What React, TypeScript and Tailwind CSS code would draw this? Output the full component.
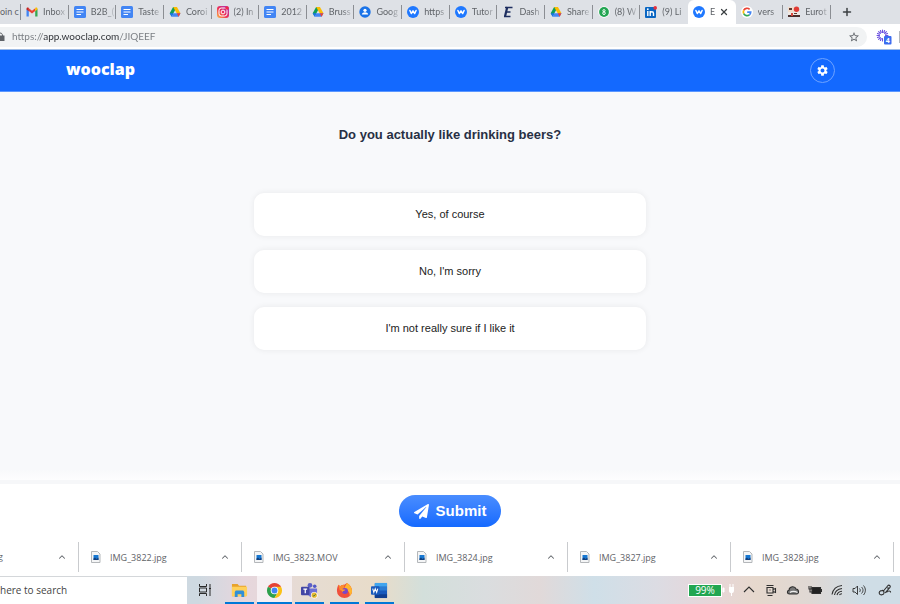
import type { ReactNode } from "react";
import { FaPaperPlane } from "react-icons/fa";
import { MdSettings, MdStarBorder } from "react-icons/md";
import { ChevronUp, Plus, X } from "lucide-react";

type Tab = { title: string; icon: ReactNode; active?: boolean; divider?: boolean };

const GmailIcon = () => (
  <svg viewBox="0 0 12 12" className="size-3">
    <path d="M.5 10.5V3l2.3 1.8v5.7z" fill="#4285f4" />
    <path d="M9.2 10.5V4.8L11.5 3v7.5z" fill="#34a853" />
    <path d="M2.8 5V2.2L6 4.8l3.2-2.6V5L6 7.6z" fill="#ea4335" />
    <path d="M.5 3.6V2.7C.5 1.5 1.9 1.2 2.8 2v3.3z" fill="#c5221f" />
    <path d="M11.5 3.6V2.7c0-1.2-1.4-1.5-2.3-.7v3.3z" fill="#fbbc04" />
  </svg>
);

const DocsIcon = () => (
  <svg viewBox="0 0 12 12" className="size-3">
    <rect width="12" height="12" rx="1.5" fill="#4285f4" />
    <path d="M2.5 3.5h7M2.5 6h7M2.5 8.5h4.5" stroke="#fff" strokeWidth="1.2" />
  </svg>
);

const DriveIcon = () => (
  <svg viewBox="0 0 12 12" className="size-3">
    <path d="M4.1 1h3.8L6 4.3 2.6 10.5.7 7.3z" fill="#0f9d58" />
    <path d="M4.1 1h3.8l3.6 6.3H7.7z" fill="#fbbc04" />
    <path d="M2.6 10.8l1.9-3.5h7l-1.9 3.5z" fill="#4285f4" />
    <path d="M7.7 7.3h3.8l-1.9 3.5z" fill="#ea4335" />
    <path d="M.7 7.3h3.8l-1.9 3.5z" fill="#1a73e8" />
  </svg>
);

const InstagramIcon = () => (
  <svg viewBox="0 0 12 12" className="size-3" fill="none">
    <defs>
      <linearGradient id="insta" x1="0" y1="1" x2="1" y2="0">
        <stop offset="0" stopColor="#fdc04a" />
        <stop offset=".45" stopColor="#ee2f55" />
        <stop offset="1" stopColor="#a033c8" />
      </linearGradient>
    </defs>
    <rect width="12" height="12" rx="3" fill="url(#insta)" />
    <rect x="2" y="2" width="8" height="8" rx="2.3" stroke="#fff" />
    <circle cx="6" cy="6" r="1.9" stroke="#fff" />
    <circle cx="10" cy="2" r="1.8" fill="#f02849" />
  </svg>
);

const ContactsIcon = () => (
  <svg viewBox="0 0 12 12" className="size-3">
    <circle cx="6" cy="6" r="5.7" fill="#1a73e8" />
    <circle cx="6" cy="4.3" r="1.6" fill="#fff" />
    <path d="M2.8 8.6c.4-3 6-3 6.400 0z" fill="#fff" />
  </svg>
);

const WooclapIcon = () => (
  <svg viewBox="0 0 12 12" className="size-3">
    <circle cx="6" cy="6" r="6" fill="#1f78ff" />
    <path
      d="M2.9 4.5l1.4 3L6 4.8l1.7 2.7 1.4-3"
      fill="none"
      stroke="#fff"
      strokeWidth="1.5"
      strokeLinecap="round"
      strokeLinejoin="round"
    />
  </svg>
);

const DashIcon = () => (
  <svg viewBox="0 0 12 12" className="size-3" fill="none" stroke="#1d2d5f">
    <path d="M5.300 1L3 10.500" strokeWidth="2.200" />
    <path d="M3 1.500h7.500M4 6h4.500M2 10.500h6.500" strokeWidth="1.500" />
  </svg>
);

const WhatsappIcon = () => (
  <svg viewBox="0 0 12 12" className="size-3">
    <circle cx="6" cy="6" r="5.8" fill="#fff" />
    <circle cx="6" cy="6" r="4.9" fill="#23a552" />
    <g fill="none" stroke="#fff">
      <circle cx="6" cy="4.7" r="1.1" />
      <circle cx="6" cy="7.2" r="1.3" />
    </g>
  </svg>
);

const LinkedinIcon = () => (
  <svg viewBox="0 0 12 12" className="size-3">
    <rect y="1" width="11" height="11" rx="1" fill="#0a66c2" />
    <path d="M2.8 5v5M5.2 10V5M5.2 7.5c0-2.3 3.3-2.3 3.3 0V10" fill="none" stroke="#fff" strokeWidth="1.4" />
    <circle cx="2.8" cy="3.2" r=".9" fill="#fff" />
    <circle cx="10.2" cy="1.9" r="1.8" fill="#e8303c" />
  </svg>
);

const GoogleIcon = () => (
  <svg viewBox="0 0 12 12" className="size-3">
    <circle cx="6" cy="6" r="6" fill="#fff" />
    <g fill="none" strokeWidth="1.7">
      <path d="M8.6 3.3A3.7 3.7 0 0 0 2.7 4.4" stroke="#ea4335" />
      <path d="M2.7 4.4a3.7 3.7 0 0 0 0 3.2" stroke="#fbbc04" />
      <path d="M2.7 7.6a3.7 3.7 0 0 0 5.7 1.2" stroke="#34a853" />
      <path d="M8.4 8.8c.9-.7 1.3-1.7 1.3-2.7H6.2" stroke="#4285f4" />
    </g>
  </svg>
);

const PhotoIcon = () => (
  <svg viewBox="0 0 12 12" className="size-3">
    <path d="M0 1h6v6H0z" fill="#f3dccb" />
    <path d="M0 6h12v5H0z" fill="#efe9e4" />
    <path d="M0 9h12v2H0z" fill="#4a2e2c" />
    <path d="M3 7h2v3H3z" fill="#d8473c" />
    <path d="M1 2h3v2H1zM6 7h3v1H6z" fill="#5d3930" />
    <circle cx="8.5" cy="3.300" r="2.700" fill="#e13a34" />
  </svg>
);

const tabs: Tab[] = [
  { title: "Inbox", icon: <GmailIcon /> },
  { title: "B2B_(", icon: <DocsIcon /> },
  { title: "Taste", icon: <DocsIcon /> },
  { title: "Coroi", icon: <DriveIcon /> },
  { title: "(2) In", icon: <InstagramIcon /> },
  { title: "2012", icon: <DocsIcon /> },
  { title: "Bruss", icon: <DriveIcon /> },
  { title: "Goog", icon: <ContactsIcon /> },
  { title: "https", icon: <WooclapIcon /> },
  { title: "Tutor", icon: <WooclapIcon /> },
  { title: "Dash", icon: <DashIcon /> },
  { title: "Share", icon: <DriveIcon /> },
  { title: "(8) W", icon: <WhatsappIcon /> },
  { title: "(9) Li", icon: <LinkedinIcon />, divider: false },
  { title: "E", icon: <WooclapIcon />, active: true, divider: false },
  { title: "vers", icon: <GoogleIcon /> },
  { title: "Eurot", icon: <PhotoIcon /> },
];

const answers = ["Yes, of course", "No, I'm sorry", "I'm not really sure if I like it"];

const downloads = ["IMG_3822.jpg", "IMG_3823.MOV", "IMG_3824.jpg", "IMG_3827.jpg", "IMG_3828.jpg"];

function TabStrip() {
  return (
    <div className="flex h-6 items-stretch bg-[#dee1e6] pr-[69px] font-['Lato','Open_Sans',sans-serif] text-[9px] text-[#5f6368]">
      <button className="my-1 w-[21px] shrink-0 border-r border-[#8b8e93] text-left whitespace-nowrap">
        oin c
      </button>
      {tabs.map((tab, i) => (
        <div
          key={i}
          className={`flex min-w-0 flex-1 items-center ${tab.active ? "rounded-t-md bg-white" : ""}`}
        >
          <button className="flex min-w-0 flex-1 items-center gap-[5px] pl-[5px] text-left">
            <span className="shrink-0">{tab.icon}</span>
            <span className="flex-1 whitespace-nowrap [mask-image:linear-gradient(to_right,#000_60%,#0004)]">
              {tab.title}
            </span>
          </button>
          {tab.active && (
            <button aria-label="Close tab" className="mr-1.5 text-[#3c4043]">
              <X className="size-[10px]" strokeWidth={3} />
            </button>
          )}
          <span
            className={`h-[14px] w-px shrink-0 ${tab.divider === false ? "" : "ml-[3px] bg-[#8b8e93]"}`}
          />
        </div>
      ))}
      <button aria-label="New tab" className="-mr-[22px] ml-2.5 flex w-3 items-center text-[#3c4043]">
        <Plus className="size-3" strokeWidth={3} />
      </button>
    </div>
  );
}

function AddressBar() {
  return (
    <div className="flex h-[25px] items-center bg-white">
      <div className="flex h-5 flex-1 items-center rounded-r-full bg-[#f1f3f4] pr-[7px]">
        <svg viewBox="0 0 5 9" className="mr-[7px] h-[9px] w-[5px]">
          <path d="M0 3.5h4.5V9H0z" fill="#5f6368" />
          <path d="M0 1c1.8 0 2.5 1 2.5 3" fill="none" stroke="#5f6368" />
        </svg>
        <input
          type="text"
          aria-label="Address"
          defaultValue="https://app.wooclap.com/JIQEEF"
          className="min-w-0 flex-1 bg-[linear-gradient(to_right,#777b80_31px,#2b2e33_31px,#2b2e33_107px,#777b80_107px)] bg-clip-text font-['Lato','Open_Sans',sans-serif] text-[10px] text-transparent outline-none"
        />
        <button aria-label="Bookmark this tab" className="text-[#5f6368]">
          <MdStarBorder className="size-3" />
        </button>
      </div>
      <button aria-label="Extension" className="ml-[9px] h-4 w-[17px]">
        <svg viewBox="0 0 17 16" className="h-4 w-[17px]">
          <g stroke="#6a4fe0" strokeWidth="1.1" strokeLinecap="round">
            <path d="M6.500 1v2.500M6.500 9.500V12M1 6.500h2.500M9.500 6.500H12M2.600 2.600l1.800 1.800M10.400 2.600L8.600 4.400M2.600 10.400l1.800-1.800M4.400 1.500l.8 2M8.600 1.500l-.8 2M1.500 4.400l2 .8M1.500 8.600l2-.8M4.400 11.500l.8-2M11.500 4.400l-2 .8" />
          </g>
          <rect x="8" y="7" width="7.500" height="8.500" rx="1" fill="#3b6cf0" />
          <text x="11.750" y="13.500" fontSize="7" fontWeight="700" textAnchor="middle" fill="#fff">
            4
          </text>
        </svg>
      </button>
      <span className="ml-1.5 h-3 w-px bg-[#b5b8bd]" />
    </div>
  );
}

function FileIcon() {
  return (
    <svg viewBox="0 0 10 12" className="h-3 w-[10px]">
      <path d="M.5.5h6L9 3v8.5H.5z" fill="#f4f5f6" stroke="#b4b7ba" />
      <path d="M2.500 4h5v5h-5z" fill="#1677d2" />
      <path d="M2.500 9V7.500L4 6.500 5.500 8l2-1.500V9z" fill="#123f7d" />
    </svg>
  );
}

function Downloads() {
  return (
    <div className="flex h-[38px] items-start bg-white pt-1 pr-1.5 text-[9px] text-[#5f6368]">
      <div className="flex h-[30px] w-[79px] shrink-0 items-center justify-between border-r border-[#c9cbce] pr-[11px]">
        <button className="-ml-0.5">g</button>
        <button aria-label="More options">
          <ChevronUp className="size-[10px]" strokeWidth={2.5} />
        </button>
      </div>
      {downloads.map((name) => (
        <div key={name} className="flex h-[30px] flex-1 items-center border-r border-[#c9cbce] pr-[11px] pl-3">
          <button className="flex flex-1 items-center gap-[9px]">
            <FileIcon />
            <span className="pt-px">{name}</span>
          </button>
          <button aria-label={`Options for ${name}`}>
            <ChevronUp className="size-[10px]" strokeWidth={2.5} />
          </button>
        </div>
      ))}
    </div>
  );
}

const apps: { name: string; current?: boolean; icon: ReactNode }[] = [
  {
    name: "File Explorer",
    icon: (
      <>
        <path d="M1 2h6l1.5 2H16v11H1z" fill="#e8a22b" />
        <path d="M1 5h16v10H1z" fill="#ffd05a" />
        <path d="M4 16v-5.5l1-1.5h8l1 1.5V16h-3v-3H7v3z" fill="#2f8fd8" />
      </>
    ),
  },
  {
    name: "Chrome",
    current: true,
    icon: (
      <>
        <path d="M9 9L2.1 5A8 8 0 0 1 15.900 5z" fill="#e54335" />
        <path d="M9 9L2.100 5A8 8 0 0 0 9 17l3.500-6z" fill="#2da04d" />
        <path d="M9 5h6.900A8 8 0 0 1 9 17l3.500-6z" fill="#fbc116" />
        <circle cx="9" cy="9" r="4" fill="#fff" />
        <circle cx="9" cy="9" r="3.1" fill="#4285f4" />
      </>
    ),
  },
  {
    name: "Teams",
    icon: (
      <>
        <circle cx="9.5" cy="3.5" r="2.5" fill="#5b5fc7" />
        <circle cx="14.5" cy="4.5" r="1.9" fill="#5059c9" />
        <path d="M7 7h10v5c0 3-2 4-4 4-4 0-6-2-6-5z" fill="#6d70d6" />
        <rect x="0" y="5" width="9" height="9" rx="1" fill="#4145a5" />
        <path d="M2.5 7.5h4M4.5 7.5V12" stroke="#fff" strokeWidth="1.3" />
        <circle cx="14" cy="14" r="3.500" fill="#fff" />
        <circle cx="14" cy="14" r="2.800" fill="#e8b730" />
        <path d="M12.500 14l1 1 2-2" fill="none" stroke="#357a38" />
      </>
    ),
  },
  {
    name: "Firefox",
    icon: (
      <>
        <path d="M2.5 3l2 1.5C6 3 8 3 9 3l2.500-2C15 3 17 6 17 9.500A8 7.500 0 0 1 1 9.500C1 7 1.500 5 2.500 3z" fill="#f0503c" />
        <path d="M11.5 1C15 3 17 6 17 9.500c0 2-1 4-2.500 5.500C15 10 12 9 9 6z" fill="#ffb52e" />
        <path d="M2.5 3l2 1.5C6 3 8 3 9 3L8 8 4 9z" fill="#fb8b2c" />
        <circle cx="9.5" cy="9.5" r="3.2" fill="#7a48c8" />
        <path d="M5 8c2-1 3 0 5 0-1 2-3 1-3 3z" fill="#ff9a2e" />
      </>
    ),
  },
  {
    name: "Word",
    icon: (
      <>
        <rect x="4" y="1" width="13" height="16" rx="1" fill="#185abd" />
        <path d="M4 1h13v4H4z" fill="#41a5ee" />
        <path d="M4 5h13v4H4z" fill="#2b7cd3" />
        <path d="M4 13h13v4H4z" fill="#103f91" />
        <rect x="0" y="4.5" width="9" height="9" rx="1" fill="#185abd" />
        <path d="M1.8 7l1.2 4 1.5-4L6 11l1.200-4" fill="none" stroke="#fff" strokeWidth="1.1" />
      </>
    ),
  },
];

const trayIcons: { name: string; icon: ReactNode }[] = [
  { name: "Show hidden icons", icon: <path d="M2 9l5-5 5 5" /> },
  {
    name: "Meet now",
    icon: <path d="M3 4.500h6v5.500H3zM9 6.500l2.500-1v4L9 8.500M2.500 2.500h7M6 6.500v1M3.500 12.500h5" />,
  },
  {
    name: "OneDrive",
    icon: (
      <>
        <path d="M3.500 11C.8 11 .8 7.500 3 7.200c.3-4.200 6-4.500 7-1.200 3 0 3.500 5 .5 5z" fill="#777" />
        <path d="M4 9.500c1.500-1.500 5-1.500 7.500 0" stroke="#eee" />
      </>
    ),
  },
  {
    name: "Battery",
    icon: (
      <>
        <path d="M4 4.500h8.500v6H4z" fill="#222" />
        <path d="M1 3v3h3M3 3v3M2 6v3h2M13.500 6v3" />
      </>
    ),
  },
  {
    name: "Network",
    icon: <path d="M2 11.5C3 6 7 3 12 2.5M4.5 12C5 8.5 8 6 12 5.500M7 12c.5-2 2.500-3.500 5-3.700M9.500 12c.3-.8 1.300-1.300 2.500-1.300" />,
  },
  {
    name: "Volume",
    icon: <path d="M1 5.5h2L5.500 3v8.500L3 9H1zM7.500 5.500c1 1 1 2.500 0 3.500M9.500 4c2 2 2 4.500 0 6.500M11.500 2.500c2.500 3 2.500 6.500 0 9.500" strokeWidth=".9" />,
  },
  {
    name: "Pen",
    icon: (
      <path d="M5 8.5L10 2.500c1-1 3 .5 2 1.800L7 10M4 7.500c-2 0-3.500 2-2.500 3.500S6 12 6 10 5 6.500 3.500 8M8.500 9.500c1-2 4.500-2 4 0M9 5h3" />
    ),
  },
];

function Taskbar() {
  return (
    <div className="flex h-7 bg-[linear-gradient(to_right,#ced9e1_22%,#e6d6dd_27%,#e6dcd1_35%,#e8dcc9_42%,#d3dfdb_47%,#dadddf_54%,#e1d9d9_60%,#cfdfe8_66%,#dcdce3_73%,#e7d6d9_79%,#e6d8cd_84%,#dfd8d4_90%,#cfdde6_96%)]">
      <input
        type="search"
        aria-label="Search"
        defaultValue="here to search"
        className="w-[187px] border-t border-[#d4d7da] bg-white text-[10px] text-[#444] outline-none"
      />
      <button aria-label="Task view" className="flex w-[35px] items-center justify-center">
        <svg viewBox="0 0 14 14" className="size-[14px]" fill="none" stroke="#2b2b2b">
          <path d="M1.5 1v2.5h7V1M1.5 13v-2.500h7V13M1.500 5h7v4h-7zM12 1v12M11 5.500h2" />
        </svg>
      </button>
      <div className="flex">
        {apps.map((app) => (
          <button
            key={app.name}
            aria-label={app.name}
            className={`flex w-[35px] flex-col items-center justify-between pt-1.5 ${app.current ? "bg-[#f5eff2]" : ""}`}
          >
            <svg viewBox="0 0 18 18" className="size-[17px]">
              {app.icon}
            </svg>
            <span className={`h-0.5 bg-[#0078d7] ${app.current ? "w-[35px]" : "w-[29px]"}`} />
          </button>
        ))}
      </div>
      <div className="ml-auto flex items-center pr-2">
        <span className="flex h-[13px] w-[34px] items-center justify-center border border-white bg-[#22a651] text-[10px] leading-none text-white">
          99%
        </span>
        <svg viewBox="0 0 14 14" className="mr-1.5 size-[14px]">
          <path d="M1 5h1v4H1zM8 1v3M11 1v3" fill="#fff" stroke="#fff" />
          <path d="M7 4h5v3c0 3-1.500 3-2 3v3H9v-3C7 10 7 8 7 7z" fill="#fff" />
        </svg>
        <div className="flex items-center gap-2">
          {trayIcons.map((item) => (
            <button key={item.name} aria-label={item.name} className="last:ml-1">
              <svg viewBox="0 0 14 14" className="size-[14px]" fill="none" stroke="#2e2e2e" strokeWidth="1.1">
                {item.icon}
              </svg>
            </button>
          ))}
        </div>
      </div>
    </div>
  );
}

export default function App() {
  return (
    <div className="flex min-h-screen flex-col overflow-hidden bg-white font-['Open_Sans','Noto_Sans',sans-serif]">
      <TabStrip />
      <AddressBar />
      <header className="flex h-[43px] items-center justify-between border-t border-b border-t-[#9dbbe6] border-b-[#5b97ff] bg-[#1369ff] pr-[65px] pl-[66px]">
        <a href="#" className="pb-1 text-base leading-none font-extrabold text-white">
          wooclap
        </a>
        <button
          aria-label="Settings"
          className="flex size-[25px] items-center justify-center rounded-full border border-[#6ea3ff] text-white"
        >
          <MdSettings className="size-[13px]" />
        </button>
      </header>
      <main className="flex flex-1 flex-col items-center bg-[#f8f9fb] px-4 pt-[33px] font-['Liberation_Sans',Arial,sans-serif]">
        <h1 className="text-[13px] leading-5 font-bold text-[#283044]">Do you actually like drinking beers?</h1>
        <div className="mt-12 flex w-full max-w-[392px] flex-col gap-[14px]">
          {answers.map((answer) => (
            <button
              key={answer}
              className="h-[43px] rounded-[10px] bg-white text-[11px] text-[#222] shadow-[0_0_6px_rgba(0,0,0,0.07)]"
            >
              {answer}
            </button>
          ))}
        </div>
      </main>
      <div className="h-[10px] bg-linear-to-b from-[#f8f9fb] to-[#fdfdfe]" />
      <footer className="flex h-[58px] justify-center border-t-4 border-[#f6f7f9] bg-white pt-[11px] font-['Liberation_Sans',Arial,sans-serif]">
        <button className="flex h-8 w-[102px] items-center justify-center gap-[7px] rounded-full bg-linear-to-b from-[#4a8dff] to-[#1369ff] text-[15px] font-bold text-white">
          <FaPaperPlane className="size-[15px]" />
          Submit
        </button>
      </footer>
      <Downloads />
      <Taskbar />
    </div>
  );
}
